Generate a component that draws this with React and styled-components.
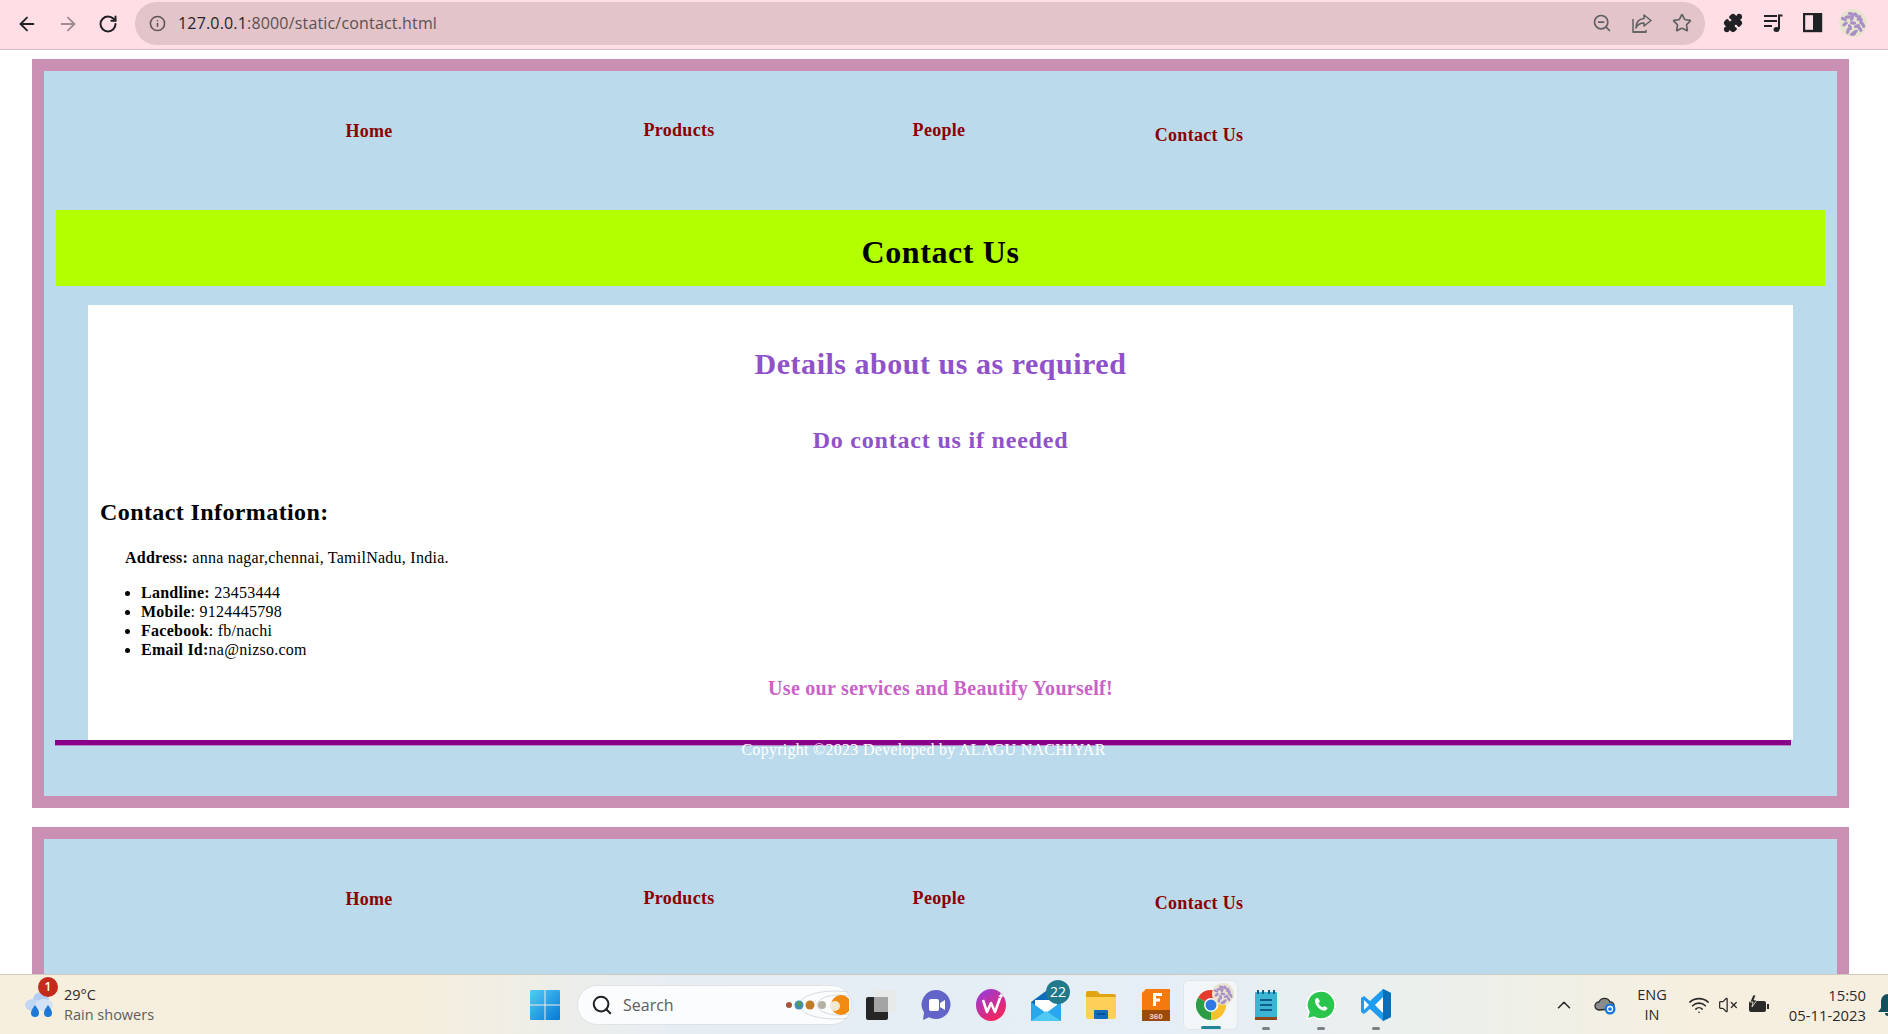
import React from 'react'
import styled, { createGlobalStyle } from 'styled-components'
import { ArrowLeft, ArrowRight, RotateCw, Info, ZoomOut, Star, Puzzle, ChevronUp, Wifi, VolumeX, Search } from 'lucide-react'

const GlobalStyle = createGlobalStyle`
  html, body {
    margin: 0;
    padding: 0;
    height: 100%;
    overflow: hidden;
    background: #fff;
  }
  #root {
    height: 100%;
  }
`

const Screen = styled.div`
  width: 1888px;
  height: 1034px;
  display: flex;
  flex-direction: column;
  overflow: hidden;
`

// browser chrome
const TopBar = styled.div`
  height: 49px;
  flex: none;
  display: flex;
  align-items: center;
  background: #ffdfe5;
  border-bottom: 1px solid #d3bcc1;
  font-family: 'Open Sans', sans-serif;
`
const NavIcons = styled.div`
  width: 135px;
  flex: none;
  display: flex;
  align-items: center;
  gap: 19px;
  padding-left: 16px;
  box-sizing: border-box;
  margin-bottom: 2px;
`
const AddressBar = styled.div`
  width: 1570px;
  height: 43px;
  margin-bottom: 3px;
  flex: none;
  display: flex;
  align-items: center;
  background: #e2c4c9;
  border-radius: 22px;
  padding: 0 3px 0 14px;
  box-sizing: border-box;
`
const Url = styled.div`
  margin-left: 12px;
  font-size: 16px;
  letter-spacing: 0.17px;
  color: #5d5053;
  flex: 1;
  span {
    color: #1f2430;
  }
`
const IconSlot = styled.div`
  width: 40px;
  display: flex;
  align-items: center;
  justify-content: center;
`
const BarActions = styled.div`
  display: flex;
  align-items: center;
  color: #5f6063;
`
const ExtActions = styled.div`
  display: flex;
  align-items: center;
  margin-left: 8px;
  margin-bottom: 3px;
  color: #202124;
`

// the page
const Page = styled.div`
  flex: 1;
  min-height: 0;
  overflow: hidden;
  background: #fff;
  font-family: 'Liberation Serif', serif;
  padding: 9px 39px 0 32px;
`
const Frame = styled.div`
  width: 1817px;
  height: 749px;
  box-sizing: border-box;
  border: 12px solid #ca90b4;
  background: #bbdaeb;
  margin-bottom: 19px;
`
const NavRow = styled.div`
  height: 139px;
  display: flex;
  padding-left: 195px;
  box-sizing: border-box;
`
const NavLink = styled.a`
  width: 260px;
  margin-right: ${(props) => props.$gap || 0}px;
  padding-top: ${(props) => props.$top}px;
  text-align: center;
  font-size: 18px;
  font-weight: bold;
  letter-spacing: 0.3px;
  color: #8b0000;
  line-height: 21px;
`
const Banner = styled.div`
  height: 76px;
  margin: 0 12px;
  background: #b2ff00;
  padding-top: 24px;
  box-sizing: border-box;
`
const BannerTitle = styled.h1`
  margin: 0;
  font-size: 32px;
  line-height: 37px;
  letter-spacing: 0.6px;
  text-align: center;
  color: #000;
`
const Content = styled.div`
  height: 435px;
  margin: 19px 44px 0;
  padding: 42px 12px 0;
  box-sizing: border-box;
  background: #fff;
  color: #000;
`
const MainHeading = styled.h2`
  margin: 0;
  font-size: 30px;
  line-height: 34px;
  letter-spacing: 0.52px;
  text-align: center;
  color: #8f52c9;
`
const SubHeading = styled.h3`
  margin: 45px 0 0;
  font-size: 24px;
  line-height: 28px;
  letter-spacing: 0.8px;
  text-align: center;
  color: #8f52c9;
`
const InfoHeading = styled.h3`
  margin: 44px 0 0;
  font-size: 24px;
  line-height: 28px;
  letter-spacing: 0.4px;
`
const Address = styled.p`
  margin: 22px 0 0 25px;
  font-size: 16px;
  line-height: 19px;
  letter-spacing: 0.25px;
`
const InfoList = styled.ul`
  margin: 16px 0 0;
  padding: 0 0 0 41px;
  font-size: 16px;
  line-height: 19px;
  letter-spacing: 0.25px;
`
const Slogan = styled.h4`
  margin: 18px 0 0;
  font-size: 20px;
  line-height: 23px;
  letter-spacing: 0.28px;
  text-align: center;
  color: #c862c8;
`
const FooterLine = styled.div`
  height: 5px;
  margin: 0 46px 0 11px;
  background: #8b008b;
  border-bottom: 1px solid #b58cc0;
`
const Copyright = styled.p`
  margin: -5px 0 0;
  padding-right: 34px;
  font-size: 16px;
  line-height: 18px;
  letter-spacing: 0.28px;
  text-align: center;
  color: #fff;
`

// windows taskbar
const TaskBar = styled.div`
  height: 60px;
  flex: none;
  box-sizing: border-box;
  border-top: 1px solid #cfcac0;
  display: grid;
  grid-template-columns: 530px auto 1fr;
  align-items: center;
  background: linear-gradient(90deg, #f6efdd 0%, #f5eedd 22%, #e6edf3 36%, #e5eef6 62%, #edf0ea 78%, #f6efdf 90%, #f6efdf 100%);
  font-family: 'Open Sans', sans-serif;
  color: #2a2a2a;
`
const Weather = styled.div`
  display: flex;
  align-items: center;
  padding-left: 24px;
  gap: 10px;
  position: relative;
`
const Badge = styled.span`
  position: absolute;
  left: 38px;
  top: -8px;
  width: 20px;
  height: 20px;
  border-radius: 50%;
  background: ${(props) => props.$bg || '#c42b1c'};
  color: #fff;
  font-size: 12px;
  line-height: 20px;
  text-align: center;
  font-weight: 600;
`
const WeatherText = styled.div`
  font-size: 14.5px;
  line-height: 20px;
`
const Muted = styled.div`
  color: #5d5d5d;
`
const Center = styled.div`
  display: flex;
  align-items: center;
`
const SearchPill = styled.div`
  width: 275px;
  height: 40px;
  margin: 0 1px 0 17px;
  padding: 0 2px 0 13px;
  box-sizing: border-box;
  display: flex;
  align-items: center;
  gap: 10px;
  background: #fbfcfd;
  border: 1px solid #dfe3e6;
  border-radius: 20px;
  font-size: 16px;
  color: #5d5d5d;
  span {
    flex: 1;
  }
`
const AppSlot = styled.div`
  width: 55px;
  height: 50px;
  flex: none;
  display: flex;
  align-items: center;
  justify-content: center;
  position: relative;
  box-sizing: border-box;
  border-radius: 6px;
  ${(props) => props.$active && 'background: #f3f6f8; border: 1px solid #e2e6ea;'}
`
const RunDot = styled.span`
  position: absolute;
  bottom: 0;
  left: 50%;
  width: ${(props) => (props.$active ? 20 : 8)}px;
  height: 3px;
  margin-left: ${(props) => (props.$active ? -10 : -4)}px;
  border-radius: 2px;
  background: ${(props) => (props.$active ? '#23859a' : '#7b8085')};
`
const MailBadge = styled(Badge)`
  left: 28px;
  top: 0;
  font-size: 14px;
  font-weight: 400;
  width: 24px;
  height: 24px;
  line-height: 24px;
`
const ChromeAvatar = styled.span`
  position: absolute;
  right: 3px;
  top: 2px;
  line-height: 0;
`
const Tray = styled.div`
  display: flex;
  align-items: center;
  justify-content: flex-end;
  color: #2a2a2a;
  overflow: hidden;
`
const TrayIcon = styled.div`
  display: flex;
  align-items: center;
  margin-left: ${(props) => props.$left}px;
`
const Lang = styled.div`
  margin-left: 21px;
  font-size: 14.5px;
  line-height: 20px;
  text-align: center;
`
const Clock = styled.div`
  margin-left: 19px;
  font-size: 14.8px;
  line-height: 20px;
  text-align: right;
`
const BellWrap = styled.div`
  width: 11px;
  margin-left: 11px;
  overflow: hidden;
  display: flex;
`

const QueueIcon = () => (
  <svg width="22" height="22" viewBox="0 0 22 22">
    <g stroke="#202124" strokeWidth="2" fill="none">
      <path d="M2 4h13M2 9h13M2 14h8" />
      <path d="M17 17V3.500h3.500" />
    </g>
    <ellipse cx="14.500" cy="17.500" rx="3" ry="2.500" fill="#202124" />
  </svg>
)

const SidePanelIcon = () => (
  <svg width="20" height="20" viewBox="0 0 20 20">
    <rect x="1" y="1" width="17" height="17" fill="none" stroke="#202124" strokeWidth="2.400" />
    <rect x="10" y="1" width="8" height="17" fill="#202124" />
  </svg>
)

const ShareIcon = () => (
  <svg width="20" height="20" viewBox="0 0 20 20" fill="none" stroke="#5f6063" strokeWidth="1.500">
    <path d="M1 6v13h13" />
    <path d="M1 19h13v-2" />
    <path d="M12 2l7 5.500-7 5.500V10C8 10 5.500 11.500 4 15c0-5.500 3-9 8-9.500z" strokeLinejoin="round" />
  </svg>
)

const PATTERN = [
  [9, 8], [17, 6], [22, 12], [6, 15], [14, 14], [21, 20], [9, 22], [16, 23], [12, 5], [24, 16],
  [13, 9], [18, 17], [5, 10], [11, 18], [20, 9], [14, 25],
]

const Avatar = ({ size = 28 }) => (
  <svg width={size} height={size} viewBox="0 0 28 28">
    <circle cx="14" cy="14" r="14" fill="#e6e4cf" />
    {PATTERN.map(([x, y], i) => (
      <ellipse key={i} cx={x} cy={y} rx="3.200" ry="1.700" fill="#a98fc6" transform={`rotate(${i * 47} ${x} ${y})`} />
    ))}
  </svg>
)

const WeatherIcon = () => (
  <svg width="30" height="28" viewBox="0 0 30 28">
    <circle cx="17" cy="9" r="8" fill="#b5cdf2" />
    <ellipse cx="9" cy="14" rx="8" ry="6" fill="#c2d6f5" />
    <ellipse cx="20" cy="14" rx="9" ry="6" fill="#d4e2f8" />
    <path d="M10 13c3 4 4 6 4 8a4 4 0 0 1-8 0c0-2 1-4 4-8z" fill="#1e78d8" transform="translate(1 1)" />
    <path d="M23 13c3 4 4 6 4 8a4 4 0 0 1-8 0c0-2 1-4 4-8z" fill="#1e78d8" transform="translate(1 1)" />
  </svg>
)

const WindowsLogo = () => (
  <svg width="30" height="30" viewBox="0 0 30 30">
    <defs>
      <linearGradient id="win" x1="0" y1="0" x2="1" y2="1">
        <stop offset="0" stopColor="#52cdf9" />
        <stop offset="1" stopColor="#0678d4" />
      </linearGradient>
    </defs>
    <path d="M1 0h13.500v14.500H0V1a1 1 0 0 1 1-1zM15.500 0H29a1 1 0 0 1 1 1v13.500H15.500zM0 15.500h14.500V30H1a1 1 0 0 1-1-1zM15.500 15.500H30V29a1 1 0 0 1-1 1H15.500z" fill="url(#win)" />
  </svg>
)

const PlanetsIcon = () => (
  <svg width="66" height="34" viewBox="0 0 66 34">
    <g fill="none" stroke="#d7dbe0">
      <ellipse cx="52" cy="17" rx="36" ry="14" />
      <ellipse cx="56" cy="17" rx="22" ry="10" />
    </g>
    <circle cx="6" cy="17" r="3" fill="#a4553c" />
    <circle cx="16" cy="17" r="4.500" fill="#3f8db0" />
    <circle cx="16" cy="16" r="2" fill="#5e9c45" />
    <circle cx="27" cy="17" r="4.500" fill="#c17a28" />
    <circle cx="39" cy="17" r="4" fill="#b7b1a4" />
    <circle cx="58" cy="17" r="10" fill="#f08a10" />
    <circle cx="52" cy="18" r="5" fill="#f1e7d2" />
  </svg>
)

const TaskViewIcon = () => (
  <svg width="32" height="32" viewBox="0 0 32 32">
    <rect x="1" y="8" width="22" height="23" rx="2" fill="#262626" />
    <rect x="9" y="1" width="22" height="22" rx="2" fill="#e8e8e8" fillOpacity="0.9" />
    <rect x="9" y="8" width="14" height="15" fill="#a4a4a4" />
  </svg>
)

const MeetIcon = () => (
  <svg width="30" height="32" viewBox="0 0 30 32">
    <path d="M15 1a14.500 14.500 0 1 1-7 27.200L2 31l1-7.500A14.500 14.500 0 0 1 15 1z" fill="#6264c8" />
    <rect x="8" y="10" width="10" height="12" rx="2" fill="#fff" />
    <path d="M19 14l5-3v10l-5-3z" fill="#fff" />
  </svg>
)

const WpsIcon = () => (
  <svg width="30" height="32" viewBox="0 0 30 32">
    <defs>
      <linearGradient id="wps" x1="0" y1="0" x2="0.6" y2="1">
        <stop offset="0" stopColor="#8f3fe6" />
        <stop offset="1" stopColor="#f4245e" />
      </linearGradient>
    </defs>
    <ellipse cx="15" cy="16" rx="15" ry="16" fill="url(#wps)" />
    <path d="M7 11l4 12 4-9 4 9 5-14" fill="none" stroke="#fff" strokeWidth="2.600" strokeLinejoin="round" />
    <path d="M25 4l1 2 2 1-2 1-1 2-1-2-2-1 2-1z" fill="#fff" />
  </svg>
)

const MailIcon = () => (
  <svg width="30" height="32" viewBox="0 0 30 32">
    <path d="M0 13L15 2l15 11v19H0z" fill="#0f6cbd" />
    <path d="M4 11h22v14H4z" fill="#fff" />
    <path d="M0 13l15 11 15-11v19H0z" fill="#28a8ea" />
    <path d="M0 32l15-10 15 10z" fill="#50c8f4" />
  </svg>
)

const FolderIcon = () => (
  <svg width="30" height="28" viewBox="0 0 30 28">
    <path d="M0 2a2 2 0 0 1 2-2h9l3 3h14a2 2 0 0 1 2 2v4H0z" fill="#e0a412" />
    <path d="M0 6h30v20a2 2 0 0 1-2 2H2a2 2 0 0 1-2-2z" fill="#fdd058" />
    <rect x="8" y="19" width="14" height="9" rx="1" fill="#0f6cbd" />
    <rect x="11" y="22" width="8" height="2" fill="#0a4f8f" />
  </svg>
)

const FusionIcon = () => (
  <svg width="28" height="32" viewBox="0 0 28 32">
    <path d="M4 0h24v21H0V4z" fill="#f47a0f" />
    <rect x="0" y="21" width="28" height="11" fill="#9c4a0a" />
    <rect x="11" y="4" width="3" height="13" fill="#fff" />
    <rect x="11" y="4" width="9" height="3" fill="#fff" />
    <rect x="11" y="9.500" width="7" height="3" fill="#fff" />
    <text x="14" y="30" fontSize="8" fontWeight="700" fill="#f0d9c2" textAnchor="middle" fontFamily="Liberation Sans, sans-serif">360</text>
  </svg>
)

const ChromeIcon = () => (
  <svg width="30" height="30" viewBox="0 0 30 30">
    <path d="M15 15L2 7.500A15 15 0 0 1 28 7.500z" fill="#e33b2e" />
    <path d="M15 15L2 7.500A15 15 0 0 0 15 30z" fill="#2c9c46" />
    <path d="M15 15L28 7.500A15 15 0 0 1 15 30z" fill="#fbc02d" />
    <circle cx="15" cy="15" r="7" fill="#fff" />
    <circle cx="15" cy="15" r="5.500" fill="#2f78e4" />
  </svg>
)

const NotepadIcon = () => (
  <svg width="22" height="30" viewBox="0 0 22 30">
    <rect x="0" y="2" width="22" height="28" rx="1" fill="#3cb4d6" />
    <rect x="0" y="27" width="22" height="3" fill="#8a4a1c" />
    <g fill="#0f5f8a">
      <rect x="2" y="0" width="2" height="4" />
      <rect x="7" y="0" width="2" height="4" />
      <rect x="13" y="0" width="2" height="4" />
      <rect x="18" y="0" width="2" height="4" />
      <rect x="5" y="9" width="12" height="2" />
      <rect x="5" y="14" width="12" height="2" />
      <rect x="5" y="19" width="12" height="2" />
    </g>
  </svg>
)

const WhatsappIcon = () => (
  <svg width="30" height="30" viewBox="0 0 30 30">
    <path d="M15 1a14 14 0 1 1-7 26.100L1 29l2-6.800A14 14 0 0 1 15 1z" fill="#2ac54d" stroke="#fff" strokeWidth="1.500" />
    <path d="M10.500 8c-1.500 1-2 3-1 5.500 1.500 3.500 4 6 7.500 7 2.500.5 4-.5 4.500-2.500l-3-2-1.500 1.500c-2-.5-4-2.500-4.500-4.500l1.500-1.500-2-3.500z" fill="#fff" />
  </svg>
)

const VsCodeIcon = () => (
  <svg width="30" height="32" viewBox="0 0 30 32">
    <path d="M22 0l8 4v24l-8 4-13-12-6 5-3-2v-14l3-2 6 5z" fill="#1f9cf0" />
    <path d="M22 8l-8 8 8 8z" fill="#fff" />
    <path d="M3 11l5 5-5 5z" fill="#fff" />
    <path d="M22 0l8 4v24l-8 4z" fill="#0a6fb8" />
  </svg>
)

const CloudSyncIcon = () => (
  <svg width="22" height="20" viewBox="0 0 22 20">
    <path d="M5 15a4 4 0 0 1 0-8 6 6 0 0 1 11 0 3.500 3.500 0 0 1 1 7z" fill="#8b8b8b" stroke="#2a2a2a" strokeWidth="1.300" />
    <circle cx="16" cy="14" r="5.500" fill="#1477e0" />
    <circle cx="16" cy="14" r="2.500" fill="none" stroke="#fff" strokeWidth="1.300" />
  </svg>
)

const BatteryIcon = () => (
  <svg width="22" height="20" viewBox="0 0 22 20">
    <rect x="1" y="6" width="17" height="11" rx="2" fill="#2a2a2a" />
    <rect x="19" y="9" width="2" height="5" fill="#2a2a2a" />
    <path d="M5 0L2 7h3l-1 5 5-7H6l2-5z" fill="#2a2a2a" stroke="#f6efdf" strokeWidth="0.800" />
  </svg>
)

const BellIcon = () => (
  <svg width="22" height="26" viewBox="0 0 22 26" style={{ flex: 'none' }}>
    <path d="M11 2a7 7 0 0 1 7 7v7l3 4H1l3-4V9a7 7 0 0 1 7-7z" fill="#134f5c" />
    <path d="M8 21a3 3 0 0 0 6 0z" fill="#134f5c" />
  </svg>
)

const NavBlock = () => (
  <NavRow>
    <NavLink $top={50} $gap={50}>Home</NavLink>
    <NavLink $top={49}>Products</NavLink>
    <NavLink $top={49}>People</NavLink>
    <NavLink $top={54}>Contact Us</NavLink>
  </NavRow>
)

const App = () => {
  return (
    <Screen>
      <GlobalStyle />
      <TopBar>
        <NavIcons>
          <ArrowLeft size={22} color="#202124" />
          <ArrowRight size={22} color="#a08d92" />
          <RotateCw size={20} color="#202124" strokeWidth={2.4} />
        </NavIcons>
        <AddressBar>
          <Info size={17} color="#5f5558" strokeWidth={2.2} />
          <Url><span>127.0.0.1</span>:8000/static/contact.html</Url>
          <BarActions>
            <IconSlot><ZoomOut size={20} /></IconSlot>
            <IconSlot><ShareIcon /></IconSlot>
            <IconSlot><Star size={20} /></IconSlot>
          </BarActions>
        </AddressBar>
        <ExtActions>
          <IconSlot><Puzzle size={20} fill="#202124" /></IconSlot>
          <IconSlot><QueueIcon /></IconSlot>
          <IconSlot><SidePanelIcon /></IconSlot>
          <IconSlot><Avatar /></IconSlot>
        </ExtActions>
      </TopBar>

      <Page>
        <Frame>
          <NavBlock />
          <Banner>
            <BannerTitle>Contact Us</BannerTitle>
          </Banner>
          <Content>
            <MainHeading>Details about us as required</MainHeading>
            <SubHeading>Do contact us if needed</SubHeading>
            <InfoHeading>Contact Information:</InfoHeading>
            <Address><b>Address:</b> anna nagar,chennai, TamilNadu, India.</Address>
            <InfoList>
              <li><b>Landline:</b> 23453444</li>
              <li><b>Mobile</b>: 9124445798</li>
              <li><b>Facebook</b>: fb/nachi</li>
              <li><b>Email Id:</b>na@nizso.com</li>
            </InfoList>
            <Slogan>Use our services and Beautify Yourself!</Slogan>
          </Content>
          <FooterLine />
          <Copyright>Copyright ©2023 Developed by ALAGU NACHIYAR</Copyright>
        </Frame>
        <Frame>
          <NavBlock />
        </Frame>
      </Page>

      <TaskBar>
        <Weather>
          <WeatherIcon />
          <Badge>1</Badge>
          <WeatherText>
            29°C
            <Muted>Rain showers</Muted>
          </WeatherText>
        </Weather>
        <Center>
          <WindowsLogo />
          <SearchPill>
            <Search size={22} color="#202020" strokeWidth={2.2} />
            <span>Search</span>
            <PlanetsIcon />
          </SearchPill>
          <AppSlot><TaskViewIcon /></AppSlot>
          <AppSlot><MeetIcon /></AppSlot>
          <AppSlot><WpsIcon /></AppSlot>
          <AppSlot><MailIcon /><MailBadge $bg="#23798c">22</MailBadge></AppSlot>
          <AppSlot><FolderIcon /></AppSlot>
          <AppSlot><FusionIcon /></AppSlot>
          <AppSlot $active>
            <ChromeIcon />
            <ChromeAvatar><Avatar size={22} /></ChromeAvatar>
            <RunDot $active />
          </AppSlot>
          <AppSlot><NotepadIcon /><RunDot /></AppSlot>
          <AppSlot><WhatsappIcon /><RunDot /></AppSlot>
          <AppSlot><VsCodeIcon /><RunDot /></AppSlot>
        </Center>
        <Tray>
          <ChevronUp size={22} strokeWidth={1.75} />
          <TrayIcon $left={19}><CloudSyncIcon /></TrayIcon>
          <Lang>ENG<br />IN</Lang>
          <TrayIcon $left={21}><Wifi size={22} strokeWidth={1.75} /></TrayIcon>
          <TrayIcon $left={8}><VolumeX size={20} strokeWidth={1.5} /></TrayIcon>
          <TrayIcon $left={10}><BatteryIcon /></TrayIcon>
          <Clock>15:50<br />05-11-2023</Clock>
          <BellWrap><BellIcon /></BellWrap>
        </Tray>
      </TaskBar>
    </Screen>
  )
}

export default App
